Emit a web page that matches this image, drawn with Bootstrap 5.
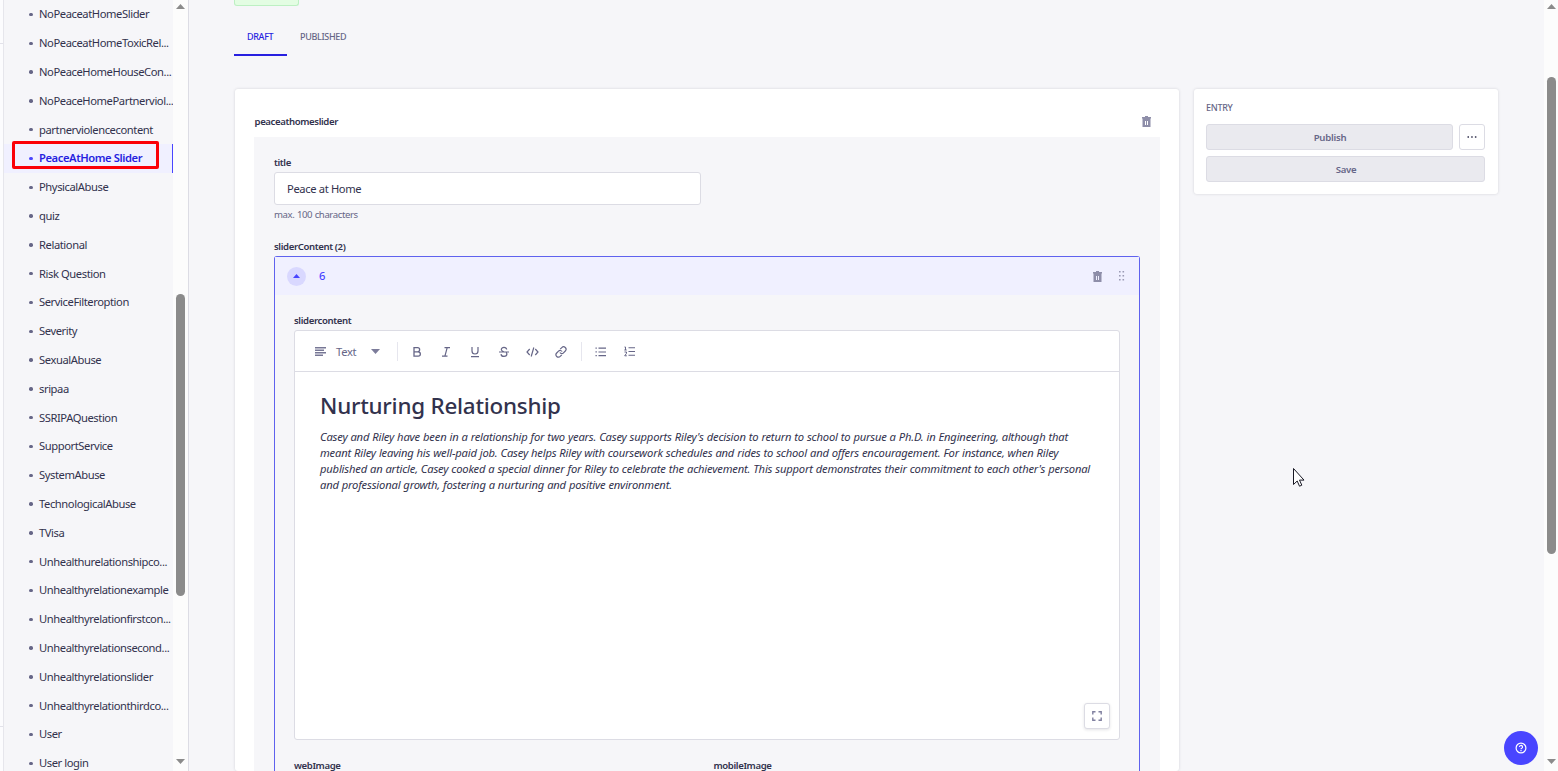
<!DOCTYPE html>
<html lang="en">
<head>
<meta charset="utf-8">
<title>PeaceAtHome Slider</title>
<link href="https://cdn.jsdelivr.net/npm/bootstrap@5.3.0/dist/css/bootstrap.min.css" rel="stylesheet">
<style>
  body { font-family: "Noto Sans", "Open Sans", sans-serif; font-size: 11.2px; line-height: 16px; color: #32324d; background: #f6f6f9; height: 771px; letter-spacing: -.3px; }
  svg { display: block; flex: none; }
  .rail { width: 4px; background: #fcfcfe; border-right: 1px solid #e6e6ec; padding-top: 43px; padding-bottom: 44px; }
  .rail i { height: 1px; background: #e2e2ea; display: block; }
  .side { width: 185px; border-right: 1px solid #dcdce4; }
  .links { width: 169px; padding-top: .1px; letter-spacing: -.42px; }
  .links a { height: 28.8px; padding-left: 25px; color: #32324d; text-decoration: none; white-space: nowrap; }
  .links a::before { content: ""; width: 4px; height: 3.4px; border-radius: 1.7px; background: #666687; margin-right: 6px; flex: none; }
  .links a.current { background: #f0f0ff; color: #271fe0; font-weight: 600; border-right: 1px solid #4945ff; }
  .links a.current::before { background: #4945ff; }
  .marker { left: 12px; top: 141px; width: 147px; height: 28px; border: 3px solid #fb0007; border-radius: 2px; }
  .scroller { width: 15px; background: #fcfcfc; }
  .thumb { background: #8b8b8b; border-radius: 5px; width: 9px; }
  .scroller svg { fill: #8b8b8b; }
  .main-col { width: 946px; margin-left: 45px; }
  .status { width: 65px; height: 6px; background: #e3fde3; border: 1px solid #bdf0c3; border-top: 0; border-radius: 0 0 3px 3px; }
  .tabbar { margin-top: 11px; height: 39px; font-size: 9px; letter-spacing: -.34px; color: #666687; }
  .tabbar span { padding: 12px 13px 0; height: 39px; font-weight: 500; }
  .tabbar .on { width: 53px; color: #271fe0; border-bottom: 2px solid #271fe0; }
  .sheet { background: #fff; border-radius: 3px; box-shadow: 0 0 3px rgba(33,33,52,.16); }
  .form-sheet { margin: 33px 1px 0; height: 682px; padding: 0 19px; }
  .lbl { font-size: 9.6px; font-weight: 600; letter-spacing: -.38px; line-height: 14px; }
  .zone { background: #f6f6f9; height: 634px; padding: 19px 20px 0; }
  .field { width: 427px; height: 33px; border: 1px solid #dcdce4; border-radius: 3px; background: #fff; padding: 0 12px; margin-top: 2px; letter-spacing: -.36px; }
  .hint { font-size: 9.6px; line-height: 14px; color: #666687; letter-spacing: -.4px; word-spacing: .4px; margin-top: 3px; }
  .acc { border: 1px solid #5f62ee; border-bottom: 0; border-radius: 3px 3px 0 0; height: 515px; margin-top: 2px; }
  .acc-head { height: 38px; background: #f0f0ff; color: #4945ff; padding: 0 14px 0 12px; }
  .chev { width: 19px; height: 19px; border-radius: 50%; background: #d9d8ff; }
  .acc-body { padding: 19px 19px 0; }
  .editor { height: 410px; background: #fff; border: 1px solid #dcdce4; border-radius: 3px; margin-top: 2px; }
  .tools { height: 41px; border-bottom: 1px solid #dcdce4; padding: 1px 0 0 20px; color: #666687; }
  .sep { width: 1px; height: 19px; background: #e6e6ee; }
  .tool { width: 28.8px; display: flex; justify-content: center; }
  .copy { padding: 20px 25px; }
  .copy h1 { font-size: 22.4px; line-height: 28px; font-weight: 500; letter-spacing: -.23px; margin: 0 0 9px; }
  .copy p { font-style: italic; white-space: nowrap; line-height: 16px; margin: 0; letter-spacing: -.18px; word-spacing: .28px; }
  .expand { right: 9px; bottom: 10px; width: 26px; height: 26px; border: 1px solid #dcdce4; border-radius: 3px; background: #fff; box-shadow: 0 1px 3px rgba(33,33,52,.12); }
  .entry { width: 304px; height: 105px; margin: 89px 0 0 14px; padding: 11px 13px 0 12px; }
  .entry h2 { font-size: 9px; line-height: 14px; letter-spacing: -.3px; font-weight: 500; color: #666687; margin: 1px 0 9px; }
  .act { height: 26px; margin-bottom: 6px; border: 1px solid #dcdce4; border-radius: 3px; background: #eaeaef; color: #666687; font-size: 9.6px; line-height: 14px; font-weight: 600; letter-spacing: -.25px; padding: 1px 0 0 1px; }
  .act.more { width: 26px; background: #fff; margin-left: 6px; padding: 0; }
  .help { right: 20px; bottom: 6px; width: 34px; height: 34px; border-radius: 50%; background: #4945ff; }
  .pointer { left: 1292px; top: 467px; }
</style>
</head>
<body class="d-flex overflow-hidden position-relative">
  <div class="rail d-flex flex-column justify-content-between flex-shrink-0"><i></i><i></i></div>
  <aside class="side d-flex flex-shrink-0 overflow-hidden">
    <nav class="links flex-shrink-0">
      <a class="d-flex align-items-center">NoPeaceatHomeSlider</a>
      <a class="d-flex align-items-center">NoPeaceatHomeToxicRel...</a>
      <a class="d-flex align-items-center">NoPeaceHomeHouseCon...</a>
      <a class="d-flex align-items-center">NoPeaceHomePartnerviol...</a>
      <a class="d-flex align-items-center">partnerviolencecontent</a>
      <a class="d-flex align-items-center current">PeaceAtHome Slider</a>
      <a class="d-flex align-items-center">PhysicalAbuse</a>
      <a class="d-flex align-items-center">quiz</a>
      <a class="d-flex align-items-center">Relational</a>
      <a class="d-flex align-items-center">Risk Question</a>
      <a class="d-flex align-items-center">ServiceFilteroption</a>
      <a class="d-flex align-items-center">Severity</a>
      <a class="d-flex align-items-center">SexualAbuse</a>
      <a class="d-flex align-items-center">sripaa</a>
      <a class="d-flex align-items-center">SSRIPAQuestion</a>
      <a class="d-flex align-items-center">SupportService</a>
      <a class="d-flex align-items-center">SystemAbuse</a>
      <a class="d-flex align-items-center">TechnologicalAbuse</a>
      <a class="d-flex align-items-center">TVisa</a>
      <a class="d-flex align-items-center">Unhealthurelationshipco...</a>
      <a class="d-flex align-items-center">Unhealthyrelationexample</a>
      <a class="d-flex align-items-center">Unhealthyrelationfirstcon...</a>
      <a class="d-flex align-items-center">Unhealthyrelationsecond...</a>
      <a class="d-flex align-items-center">Unhealthyrelationslider</a>
      <a class="d-flex align-items-center">Unhealthyrelationthirdco...</a>
      <a class="d-flex align-items-center">User</a>
      <a class="d-flex align-items-center">User login</a>
    </nav>
    <div class="scroller d-flex flex-column align-items-center flex-shrink-0">
      <svg width="9" height="5" style="margin-top:4px"><path d="M0 5 4.500 0 9 5z"/></svg>
      <div class="thumb" style="height:302px;margin-top:285px"></div>
      <svg class="mt-auto" width="9" height="5" style="margin-bottom:7px"><path d="M0 0h9L4.500 5z"/></svg>
    </div>
  </aside>
  <main class="main-col flex-shrink-0">
    <div class="status"></div>
    <div class="tabbar d-flex"><span class="on">DRAFT</span><span>PUBLISHED</span></div>
    <section class="sheet form-sheet">
      <div class="d-flex align-items-center justify-content-between" style="height:48px;padding:17px 9px 0 0">
        <span class="lbl" style="padding-left:.5px">peaceathomeslider</span>
        <svg width="9" height="11" viewBox="0 0 9 11"><path fill="#8e8ea9" fill-rule="evenodd" d="M3 0h3v1h3v1.500H8.500V11H.5V2.500H0V1h3zM3 5v4h1V5zm2 0v4h1V5z"/></svg>
      </div>
      <div class="zone">
        <div class="lbl">title</div>
        <div class="field d-flex align-items-center">Peace at Home</div>
        <div class="hint">max. 100 characters</div>
        <div class="lbl" style="margin-top:18px">sliderContent (2)</div>
        <div class="acc">
          <div class="acc-head d-flex align-items-center">
            <span class="chev d-flex align-items-center justify-content-center"><svg width="7" height="4"><path fill="#4945ff" d="M0 4 3.500 0 7 4z"/></svg></span>
            <span style="margin-left:13px;font-weight:500">6</span>
            <svg class="ms-auto" width="9" height="11" viewBox="0 0 9 11"><path fill="#8e8ea9" fill-rule="evenodd" d="M3 0h3v1h3v1.500H8.500V11H.5V2.500H0V1h3zM3 5v4h1V5zm2 0v4h1V5z"/></svg>
            <svg width="7" height="10" style="margin-left:16px"><path fill="#9a9ab4" d="M1 0h1.600v1.600H1zM4.500 0h1.600v1.600H4.500zM1 4h1.600v1.600H1zM4.500 4h1.600v1.600H4.500zM1 8h1.600v1.600H1zM4.500 8h1.600v1.600H4.500z"/></svg>
          </div>
          <div class="acc-body">
            <div class="lbl">slidercontent</div>
            <div class="editor position-relative">
              <div class="tools d-flex align-items-center">
                <svg width="12" height="9"><path fill="#777795" d="M0 0h11v1.500H0zM0 2.500h9v1.500H0zM0 5h11v1.500H0zM0 7.500h8V9H0z"/></svg>
                <span style="margin-left:9px;width:35px">Text</span>
                <svg width="9" height="5"><path fill="#7c7c9a" d="M0 0h9L4.500 5z"/></svg>
                <span class="sep" style="margin:0 5px 0 17px"></span>
                <span class="tool"><svg width="12" height="12" fill="none" stroke="#666687" stroke-width="1.300"><path d="M3 1.700h3.600a2 2 0 0 1 0 4.100H3zM3 5.800h4.200a2.100 2.100 0 0 1 0 4.300H3z"/></svg></span>
                <span class="tool"><svg width="12" height="12" fill="none" stroke="#666687" stroke-width="1.200"><path d="M4.500 1.600H10M2 10.200h5.500M7.200 1.600 4.900 10.200"/></svg></span>
                <span class="tool"><svg width="12" height="12" fill="none" stroke="#666687" stroke-width="1.200"><path d="M3 1v4a3 3 0 0 0 6 0V1M2 10.600h8"/></svg></span>
                <span class="tool"><svg width="12" height="12" fill="none" stroke="#666687" stroke-width="1.200"><path d="M8.700 3.500C8.500 2.200 7.400 1.400 6 1.400S3.300 2.200 3.300 3.500c0 1.100.9 1.700 2.500 2.200M1 6h10M8.100 6.500c.5.400.8.900.8 1.500 0 1.400-1.200 2.400-2.900 2.400-1.600 0-2.900-.8-3-2.300"/></svg></span>
                <span class="tool"><svg width="13" height="12" fill="none" stroke="#666687" stroke-width="1.200"><path d="M3.700 3 1 6l2.700 3M9.300 3 12 6 9.300 9M7.800 1.500 5.200 10.500"/></svg></span>
                <span class="tool"><svg width="12" height="12" fill="none" stroke="#666687" stroke-width="1.200"><path d="m5.200 3.200 1.600-1.600a2.300 2.300 0 0 1 3.500 3.400L8.500 6.800a2.300 2.300 0 0 1-3.600-.3M6.800 8.800 5.200 10.400A2.300 2.300 0 0 1 1.700 7l1.800-1.800a2.300 2.300 0 0 1 3.600.3"/></svg></span>
                <span class="sep" style="margin:0 5px"></span>
                <span class="tool"><svg width="12" height="10"><path fill="#666687" d="M.5.500h1.300v1.300H.5zM.5 4.300h1.300v1.300H.5zM.5 8h1.300v1.300H.5zM3.500.600H11v1.100H3.500zM3.500 4.400H11v1.100H3.500zM3.500 8.100H11v1.100H3.500z"/></svg></span>
                <span class="tool"><svg width="12" height="11"><path fill="#666687" d="M4.500 1.200H11v1.100H4.500zM4.500 5H11v1.100H4.500zM4.500 8.700H11v1.100H4.500z"/><path fill="none" stroke="#666687" d="M.5 1h1v3M.3 4h2.400M.5 6h2v1.300L.7 9.800h2.100"/></svg></span>
              </div>
              <div class="copy">
                <h1>Nurturing Relationship</h1>
                <p>Casey and Riley have been in a relationship for two years. Casey supports Riley's decision to return to school to pursue a Ph.D. in Engineering, although that<br>meant Riley leaving his well-paid job. Casey helps Riley with coursework schedules and rides to school and offers encouragement. For instance, when Riley<br>published an article, Casey cooked a special dinner for Riley to celebrate the achievement. This support demonstrates their commitment to each other's personal<br>and professional growth, fostering a nurturing and positive environment.</p>
              </div>
              <span class="expand position-absolute d-flex align-items-center justify-content-center"><svg width="10" height="10" fill="none" stroke="#8080a0" stroke-width="1.400"><path d="M.8 3.500V.8h2.700M6.500.8h2.700v2.700M9.200 6.500v2.700H6.500M3.500 9.200H.8V6.500"/></svg></span>
            </div>
            <div class="row g-0" style="padding-top:19px">
              <div class="col-6 lbl">webImage</div>
              <div class="col-6 lbl" style="padding-left:6.500px">mobileImage</div>
            </div>
          </div>
        </div>
      </div>
    </section>
  </main>
  <aside class="sheet entry flex-shrink-0">
    <h2>ENTRY</h2>
    <div class="d-flex">
      <button class="act flex-grow-1">Publish</button>
      <button class="act more d-flex align-items-center justify-content-center"><svg width="10" height="2"><path fill="#32324d" d="M.5.200H2v1.500H.5zM4.200.200h1.500v1.500H4.200zM7.900.200h1.500v1.500H7.900z"/></svg></button>
    </div>
    <button class="act w-100">Save</button>
  </aside>
  <div class="scroller d-flex flex-column align-items-center flex-shrink-0 ms-auto" style="width:14px">
    <svg width="9" height="5" style="margin-top:4px"><path d="M0 5 4.500 0 9 5z"/></svg>
    <div class="thumb" style="height:477px;margin-top:68px"></div>
    <svg class="mt-auto" width="9" height="5" style="margin-bottom:7px"><path d="M0 0h9L4.500 5z"/></svg>
  </div>
  <div class="marker position-absolute"></div>
  <span class="help position-absolute d-flex align-items-center justify-content-center"><svg width="12" height="12" fill="none" stroke="#fff" stroke-width="1.200"><circle cx="6" cy="6" r="4.900"/><path d="M4.500 5a1.500 1.500 0 1 1 2.200 1.300Q6 6.600 6 7.300M6 8v1.200"/></svg></span>
  <svg class="pointer position-absolute" width="13" height="21"><path d="M1.500 1.500v16l3.700-3.500 2.300 5.200 2.300-1-2.300-5.100H12z" fill="#fff" stroke="#181824"/></svg>
<script src="https://cdn.jsdelivr.net/npm/bootstrap@5.3.0/dist/js/bootstrap.bundle.min.js"></script>
</body>
</html>
